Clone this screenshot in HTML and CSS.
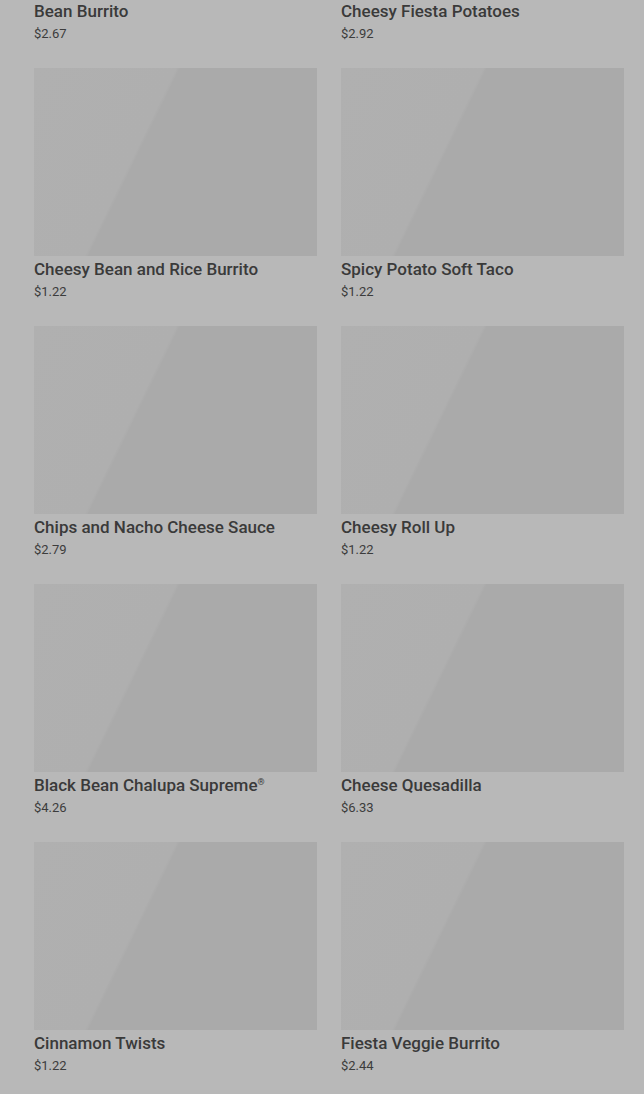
FILE: index.html
```html
<!DOCTYPE html>
<html lang="en">
<head>
    <meta charset="UTF-8">
    <meta name="viewport" content="width=device-width, initial-scale=1.0">
    <title>Menu</title>
    <link rel="stylesheet" href="styles.css">
</head>
<body>
    <div class="menu-grid">
        <div class="item">
            <div class="thumb"></div>
            <div class="name">Bean Burrito</div>
            <div class="price">$2.67</div>
        </div>
        <div class="item">
            <div class="thumb"></div>
            <div class="name">Cheesy Fiesta Potatoes</div>
            <div class="price">$2.92</div>
        </div>
        <div class="item">
            <div class="thumb"></div>
            <div class="name">Cheesy Bean and Rice Burrito</div>
            <div class="price">$1.22</div>
        </div>
        <div class="item">
            <div class="thumb"></div>
            <div class="name">Spicy Potato Soft Taco</div>
            <div class="price">$1.22</div>
        </div>
        <div class="item">
            <div class="thumb"></div>
            <div class="name">Chips and Nacho Cheese Sauce</div>
            <div class="price">$2.79</div>
        </div>
        <div class="item">
            <div class="thumb"></div>
            <div class="name">Cheesy Roll Up</div>
            <div class="price">$1.22</div>
        </div>
        <div class="item">
            <div class="thumb"></div>
            <div class="name">Black Bean Chalupa Supreme<sup>®</sup></div>
            <div class="price">$4.26</div>
        </div>
        <div class="item">
            <div class="thumb"></div>
            <div class="name">Cheese Quesadilla</div>
            <div class="price">$6.33</div>
        </div>
        <div class="item">
            <div class="thumb"></div>
            <div class="name">Cinnamon Twists</div>
            <div class="price">$1.22</div>
        </div>
        <div class="item">
            <div class="thumb"></div>
            <div class="name">Fiesta Veggie Burrito</div>
            <div class="price">$2.44</div>
        </div>
    </div>
</body>
</html>
```

FILE: styles.css
```css
body {
    margin: 0;
    background-color: #b8b8b8;
    font-family: 'Roboto', 'Liberation Sans', sans-serif;
    color: #3a3a3a;
    overflow: hidden;
}
.menu-grid {
    display: grid;
    grid-template-columns: 283px 283px;
    column-gap: 24px;
    row-gap: 26px;
    padding: 0 20px 0 34px;
    margin-top: -190px;
}
.item {
    display: flex;
    flex-direction: column;
}
.thumb {
    height: 188px;
    background: linear-gradient(116deg, #b0b0b0 0%, #afafaf 38%, #aaaaaa 39%, #aaaaaa 100%);
}
.name {
    margin-top: 3px;
    font-size: 17px;
    font-weight: 500;
    line-height: 20px;
}
.name sup {
    font-size: 9px;
    line-height: 0;
    vertical-align: 6px;
}
.price {
    margin-top: 5px;
    font-size: 13px;
    line-height: 16px;
    color: #3c3c3c;
}
```
